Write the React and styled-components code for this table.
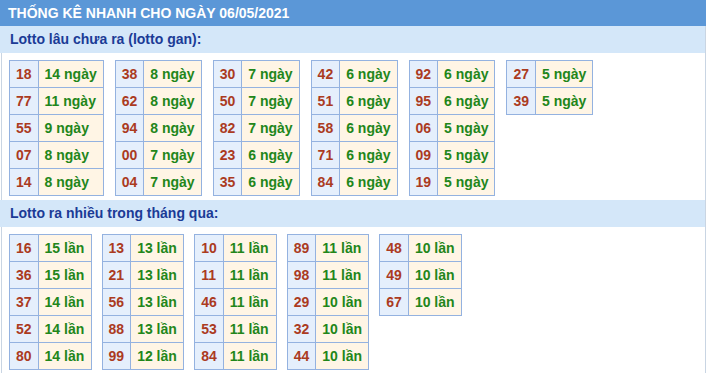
import React from "react";
import styled, { createGlobalStyle } from "styled-components";

const GlobalStyle = createGlobalStyle`
  html, body {
    margin: 0;
    padding: 0;
    background: #ffffff;
  }
  body {
    font-family: "Liberation Sans", Arial, sans-serif;
  }
`;

const gan = [
  [["18", "14 ngày"], ["77", "11 ngày"], ["55", "9 ngày"], ["07", "8 ngày"], ["14", "8 ngày"]],
  [["38", "8 ngày"], ["62", "8 ngày"], ["94", "8 ngày"], ["00", "7 ngày"], ["04", "7 ngày"]],
  [["30", "7 ngày"], ["50", "7 ngày"], ["82", "7 ngày"], ["23", "6 ngày"], ["35", "6 ngày"]],
  [["42", "6 ngày"], ["51", "6 ngày"], ["58", "6 ngày"], ["71", "6 ngày"], ["84", "6 ngày"]],
  [["92", "6 ngày"], ["95", "6 ngày"], ["06", "5 ngày"], ["09", "5 ngày"], ["19", "5 ngày"]],
  [["27", "5 ngày"], ["39", "5 ngày"]],
];

const nhieu = [
  [["16", "15 lần"], ["36", "15 lần"], ["37", "14 lần"], ["52", "14 lần"], ["80", "14 lần"]],
  [["13", "13 lần"], ["21", "13 lần"], ["56", "13 lần"], ["88", "13 lần"], ["99", "12 lần"]],
  [["10", "11 lần"], ["11", "11 lần"], ["46", "11 lần"], ["53", "11 lần"], ["84", "11 lần"]],
  [["89", "11 lần"], ["98", "11 lần"], ["29", "10 lần"], ["32", "10 lần"], ["44", "10 lần"]],
  [["48", "10 lần"], ["49", "10 lần"], ["67", "10 lần"]],
];

const Page = styled.div`
  width: 706px;
  height: 373px;
  overflow: hidden;
`;

const Header = styled.div`
  height: 26px;
  line-height: 26px;
  padding-left: 8px;
  background: #5b97d7;
  color: #ffffff;
  font-size: 14px;
  font-weight: bold;
`;

const Body = styled.div`
  margin-left: 1px;
  border-left: 1px solid #c9d5e3;
  border-right: 1px solid #c9d5e3;
  height: 347px;
`;

const SubHeader = styled.div`
  margin-left: -2px;
  height: 27px;
  line-height: 27px;
  padding-left: 10px;
  background: #d4e7f9;
  color: #1b3b96;
  font-size: 14px;
  font-weight: bold;
  margin-top: ${(p) => p.$top}px;
`;

const Tables = styled.div`
  display: flex;
  align-items: flex-start;
  gap: ${(p) => p.$gap}px;
  padding: 7px 0 0 7px;
`;

const Table = styled.table`
  border-collapse: collapse;
  font-size: 14px;
  font-weight: bold;
`;

const Num = styled.td`
  border: 1px solid #94b2e0;
  background: #e5effc;
  color: #ab3b1f;
  line-height: 26px;
  padding: 0 6px;
  white-space: nowrap;
`;

const Val = styled.td`
  border: 1px solid #94b2e0;
  background: #fff5e5;
  color: #22861a;
  line-height: 26px;
  padding: 0 6px;
  white-space: nowrap;
  width: ${(p) => (p.$w ? `${p.$w}px` : "auto")};
`;

function Group({ rows, valW }) {
  return (
    <Table>
      <tbody>
        {rows.map(([n, v]) => (
          <tr key={n}>
            <Num>{n}</Num>
            <Val $w={valW}>{v}</Val>
          </tr>
        ))}
      </tbody>
    </Table>
  );
}

export default function App() {
  return (
    <Page>
      <GlobalStyle />
      <Header>THỐNG KÊ NHANH CHO NGÀY 06/05/2021</Header>
      <Body>
        <SubHeader $top={0}>Lotto lâu chưa ra (lotto gan):</SubHeader>
        <Tables $gap={11}>
          {gan.map((g, i) => (
            <Group key={i} rows={g} />
          ))}
        </Tables>
        <SubHeader $top={4}>Lotto ra nhiều trong tháng qua:</SubHeader>
        <Tables $gap={10}>
          {nhieu.map((g, i) => (
            <Group key={i} rows={g} valW={40} />
          ))}
        </Tables>
      </Body>
    </Page>
  );
}
